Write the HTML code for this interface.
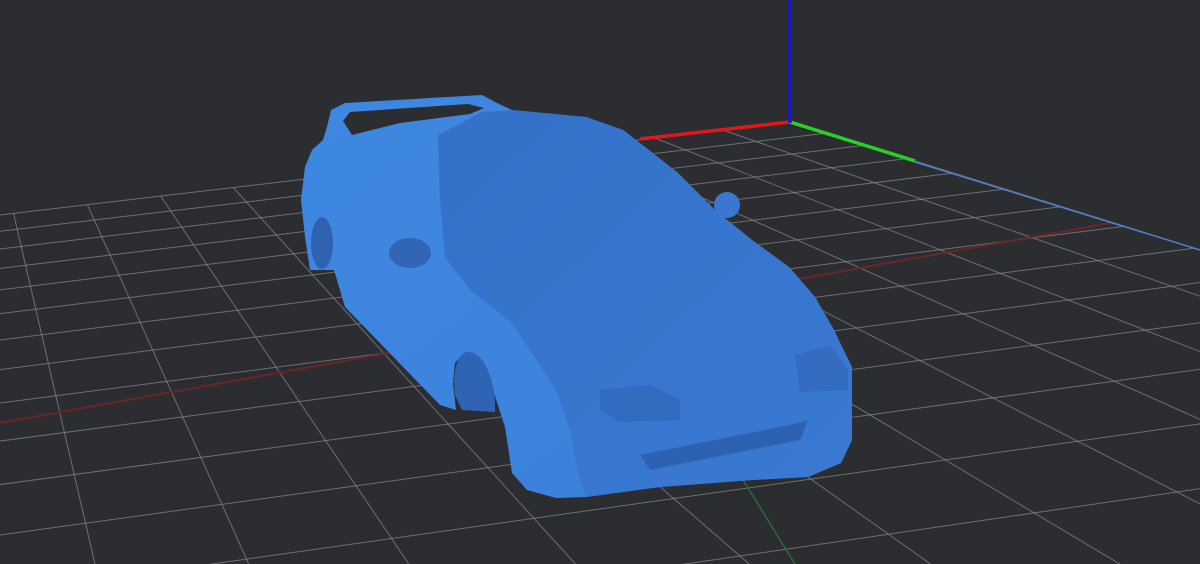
<!DOCTYPE html>
<html><head><meta charset="utf-8"><style>
html,body{margin:0;padding:0;background:#2b2d30;width:1200px;height:564px;overflow:hidden}
svg{display:block;position:absolute;left:0;top:0}
</style></head><body>
<svg id="s" width="1200" height="564" viewBox="0 0 1200 564" xmlns="http://www.w3.org/2000/svg">
<defs>
<linearGradient id="side" x1="0" y1="0" x2="1" y2="1">
<stop offset="0" stop-color="#3f88e2"/><stop offset="1" stop-color="#3a80da"/>
</linearGradient>
<linearGradient id="hood" x1="0" y1="0" x2="1" y2="1">
<stop offset="0" stop-color="#3371c9"/><stop offset="0.6" stop-color="#3876cf"/><stop offset="1" stop-color="#3a79d2"/>
</linearGradient>
</defs>
<rect width="1200" height="564" fill="#2b2d30"/>
<g id="grid" stroke="#8a8c8e" stroke-width="1" stroke-opacity="0.7"></g>
<line x1="0" y1="423" x2="1110" y2="223" stroke="#6b2528" stroke-width="2"/>
<line x1="740" y1="475" x2="795" y2="564" stroke="#2f6a33" stroke-width="1.5"/>
<line x1="915" y1="162" x2="1200" y2="250" stroke="#4b7fd0" stroke-width="1.5"/>
<line x1="640" y1="139" x2="790" y2="122" stroke="#e01818" stroke-width="3.5"/>
<line x1="790" y1="122" x2="915" y2="161" stroke="#28d028" stroke-width="3.5"/>
<line x1="790" y1="0" x2="790" y2="123" stroke="#1818d0" stroke-width="3.5"/>

<path fill="url(#side)" d="M331,110 L345,103 L482,95 L497,103 L512,110 L586,117 L623,130 L645,147 L678,173 L715,210 L752,240 L789,267 L815,297 L834,330 L845,353 L852,367 L852,440 L841,463 L808,477 L752,480 L660,487 L586,497 L556,498 L527,490 L512,473 L505,427 L493,390 L479,363 L464,353 L455,363 L453,383 L456,410 L440,405 L345,307 L334,270 L310,270 L305,237 L301,200 L305,167 L312,150 L323,140 L327,127 Z"/>
<path fill="url(#hood)" d="M438,135 L482,112 L512,110 L586,117 L623,130 L645,147 L678,173 L715,210 L752,240 L789,267 L815,297 L834,330 L845,353 L852,367 L852,440 L841,463 L808,477 L752,480 L660,487 L586,497 L578,473 L570,430 L556,390 L512,323 L470,290 L445,257 L440,200 Z"/>
<path fill="#2b2d30" d="M343,121 L350,112 L468,104 L484,108 L470,114 L400,123 L352,135 Z"/>
<ellipse cx="322" cy="243" rx="11" ry="26" fill="#2f63b2"/>
<path fill="#2f64b4" d="M455,395 C452,370 458,352 468,352 C482,352 492,372 495,400 L495,412 L462,410 Z"/>
<ellipse cx="410" cy="253" rx="21" ry="15" fill="#3166b6"/>
<circle cx="727" cy="205" r="13" fill="#3a78d0"/>
<path fill="#3068ba" d="M600,390 L650,385 L680,400 L680,420 L620,422 L600,410 Z" opacity="0.7"/>
<path fill="#3068ba" d="M795,355 L830,345 L848,370 L848,390 L800,392 Z" opacity="0.7"/>
<path fill="#2d62b0" d="M640,455 L790,425 L808,420 L800,440 L650,470 Z"/>
</svg>
<script>
(function(){
var O=[790,122],V2=[15700,-1633],V1=[-70,-146],S=0.0045,T=0.04;
function P(a,b){var w=1+a*S+b*T;return[(O[0]+a*S*V2[0]+b*T*V1[0])/w,(O[1]+a*S*V2[1]+b*T*V1[1])/w];}
var g=document.getElementById('grid'),h='';
var AMIN=-34,BMIN=-19;
for(var a=AMIN;a<=0;a++){var p=P(a,0),q=P(a,BMIN);h+='<line x1="'+p[0].toFixed(1)+'" y1="'+p[1].toFixed(1)+'" x2="'+q[0].toFixed(1)+'" y2="'+q[1].toFixed(1)+'"/>';}
for(var b=BMIN;b<=0;b++){var p=P(0,b),q=P(AMIN,b);h+='<line x1="'+p[0].toFixed(1)+'" y1="'+p[1].toFixed(1)+'" x2="'+q[0].toFixed(1)+'" y2="'+q[1].toFixed(1)+'"/>';}
g.innerHTML=h;
})();
</script>
</body></html>
